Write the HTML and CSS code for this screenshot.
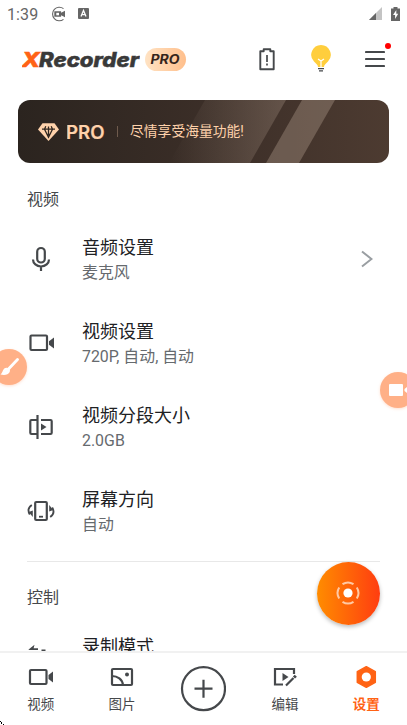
FILE: index.html
```html
<!DOCTYPE html>
<html lang="zh-CN">
<head>
<meta charset="utf-8">
<title>XRecorder</title>
<link rel="stylesheet" href="styles.css">
</head>
<body>
<div class="app">
  <div class="status">
    <span class="clock">1:39</span>
    <svg class="rec" width="16" height="16" viewBox="0 0 16 16"><path d="M12.500 2.600A6.800 6.800 0 1 0 12.500 13.400" fill="none" stroke="#666" stroke-width="1.100"/><path d="M3.300 5.200h6.800v1.600L14 4.700v6.600l-3.900-2.100v1.600H3.300z" fill="#666"/><rect x="5.300" y="6.800" width="2.700" height="2.500" fill="#fff"/></svg>
    <svg class="a-icon" width="11" height="11" viewBox="0 0 11 11"><rect width="11" height="11" rx="1" fill="#666"/><path d="M3 8.500 5.500 2.500 8 8.500M3.800 6.700h3.400" fill="none" stroke="#fff" stroke-width="1.300"/></svg>
    <svg class="signal" width="13" height="13" viewBox="0 0 13 13"><path d="M0 13 13 0V13z" fill="#c4c4c4"/><path d="M0 13 7 6V13z" fill="#666"/></svg>
    <svg class="batt" width="9" height="14" viewBox="0 0 9 14"><path d="M2.500 0h4v1.500H9V14H0V1.500h2.500z" fill="#666"/><path d="M5.300 3 2 8h2.100v4L7.200 6.800H5.300z" fill="#fff"/></svg>
  </div>
  <header class="header">
    <svg class="logo" width="118" height="24" viewBox="0 0 118 24"><text class="logo-text logo-x" y="19.500" x="-0.500" textLength="18.500" lengthAdjust="spacingAndGlyphs">X</text><text class="logo-text" y="19.500" x="17" textLength="100" lengthAdjust="spacingAndGlyphs">Recorder</text></svg>
    <span class="badge"><svg width="41" height="23" viewBox="0 0 41 23"><text class="badge-text" x="5.500" y="16" textLength="29" lengthAdjust="spacingAndGlyphs">PRO</text></svg></span>
    <svg class="h-batt" width="16" height="23" viewBox="0 0 16 23"><path d="M1.300 3.300h3.400V1.200h6.600v2.100h3.400v18H1.300z" fill="none" stroke="#45484b" stroke-width="1.900" stroke-linejoin="round"/><path d="M8 7v7M8 15.500v2" stroke="#45484b" stroke-width="1.700"/></svg>
    <svg class="bulb" width="20" height="27" viewBox="0 0 20 27"><path d="M10 0a9.800 9.800 0 0 0-7 16.600c2.200 2.300 3.700 3 4 5.400h6c.3-2.400 1.800-3.100 4-5.400A9.800 9.800 0 0 0 10 0z" fill="#ffce3d"/><path d="M7 14l3 2 3-2M10 16v6" fill="none" stroke="#fff" stroke-width="1.200"/><path d="M7 23.600h6M8 25.800h4" stroke="#45484b" stroke-width="1.200"/></svg>
    <div class="menu"><svg width="20" height="18" viewBox="0 0 20 18"><path d="M1 2h18M1 9h18M1 16h18" stroke="#45484b" stroke-width="2.200" stroke-linecap="round"/></svg><i class="dot"></i></div>
  </header>
  <section class="banner">
    <svg class="shine" width="371" height="63" viewBox="0 0 371 63"><defs><linearGradient id="g1"><stop offset="0" stop-color="#9b887a" stop-opacity="0"/><stop offset="1" stop-color="#9b887a" stop-opacity=".38"/></linearGradient></defs><path d="M187 0h81l-36 63H151z" fill="url(#g1)"/><path d="M284 0h33l-36 63h-33z" fill="#b9a594" fill-opacity=".35"/></svg>
    <svg class="gem" width="21" height="18" viewBox="0 0 21 18"><path d="M4.500.3h12L21 6.500 10.500 18 0 6.500z" fill="#ffd2ab"/><path d="M4 6.200h13M7.800 3.300l-1.300 3 4 8 4-8-1.300-3M10.500 3.600v9" fill="none" stroke="#30261f" stroke-width="1.300"/></svg>
    <svg class="banner-pro" width="40" height="20" viewBox="0 0 40 20"><text class="banner-pro-text" x="-1" y="16.500" textLength="38.500" lengthAdjust="spacingAndGlyphs">PRO</text></svg><i class="bar"></i><span class="banner-text">尽情享受海量功能!</span>
  </section>
  <main class="list">
    <h2 class="section">视频</h2>
    <div class="row">
      <svg class="icon" width="28" height="28" viewBox="0 0 28 28"><rect x="10.200" y="3" width="7.600" height="14.500" rx="3.800"/><path d="M6 14.500a8 7 0 0 0 16 0M14 21.500V26"/></svg>
      <div class="words"><b>音频设置</b><span>麦克风</span></div>
      <svg class="chev" width="12" height="18" viewBox="0 0 12 18"><path d="M1 1.500 10.500 9 1 16.500" fill="none" stroke="#999ea2" stroke-width="2"/></svg>
    </div>
    <div class="row">
      <svg class="icon" width="28" height="28" viewBox="0 0 28 28"><rect x="3.500" y="6.500" width="16.500" height="14.500" rx="1"/><path class="solid" d="M27 8.500v11l-5-3.700v-3.600z"/></svg>
      <div class="words"><b>视频设置</b><span>720P, 自动, 自动</span></div>
    </div>
    <div class="row">
      <svg class="icon" width="28" height="28" viewBox="0 0 28 28"><path d="M10 7H4.500Q3.300 7 3.300 8.200v11.600Q3.300 21 4.500 21H10M10.500 2v24M14 7h9.500q1.200 0 1.200 1.200v11.600q0 1.200-1.200 1.200H14"/><path class="solid" d="M14 10.500l5.500 3.500-5.500 3.500z"/></svg>
      <div class="words"><b>视频分段大小</b><span>2.0GB</span></div>
    </div>
    <div class="row">
      <svg class="icon" width="28" height="28" viewBox="0 0 28 28"><rect x="8.200" y="5" width="11.600" height="18" rx="1"/><path d="M12 19.700h4" stroke-width="1.800"/><path d="M4.800 8C1 10.500.8 14 2.800 17.500M23.200 20c3.800-2.500 4-6 2-9.500" stroke-width="1.800"/><path class="solid" d="M1.700 15 5.800 13.500v6.500zM26.300 13 22.200 14.500V8z"/></svg>
      <div class="words"><b>屏幕方向</b><span>自动</span></div>
    </div>
    <hr class="rule">
    <h2 class="section second">控制</h2>
    <div class="row">
      <svg class="icon" width="28" height="28" viewBox="0 0 28 28"><path class="solid" d="M1.300 5.700 7.500.8 6.600 4.200H11v1.800H3z"/><path class="solid" d="M14.500 5.500h4v1.500l2 .5V12h-6z"/></svg>
      <div class="words"><b>录制模式</b></div>
    </div>
  </main>
  <nav class="nav">
    <div class="tab"><svg class="icon" width="28" height="28" viewBox="0 0 28 28"><rect x="3" y="7" width="16.500" height="14" rx="1"/><path class="solid" d="M26 8.500v11l-4.500-3.500v-4z"/></svg><span>视频</span></div>
    <div class="tab"><svg class="icon" width="28" height="28" viewBox="0 0 28 28"><rect x="4" y="6" width="20" height="16" rx="1"/><path d="M4 13c5.500 0 10.500 3.500 11 9"/><circle class="solid" cx="19" cy="11.500" r="2"/></svg><span>图片</span></div>
    <div class="tab plus"><svg class="icon" width="46" height="46" viewBox="0 0 46 46"><circle cx="23.500" cy="22.700" r="21.500"/><path d="M14.500 22.700h18M23.500 13.700v18"/></svg></div>
    <div class="tab"><svg class="icon" width="28" height="28" viewBox="0 0 28 28"><path d="M23 11V6H4v15.500h8M15 22.500l7.500-7.500"/><path d="M23 14.500l1.800-1.800" stroke-width="3"/><path class="solid" d="M11.500 10l6 4-6 4z"/></svg><span>编辑</span></div>
    <div class="tab active"><svg width="28" height="28" viewBox="0 0 28 28"><path d="M14.300 3.700l9 5v10.600l-9 5-9-5V8.700z" fill="#ff6314" stroke="#ff6314" stroke-width="1.500" stroke-linejoin="round"/><circle cx="14.300" cy="14" r="4.600" fill="#fff"/></svg><span>设置</span></div>
  </nav>
  <div class="bubble brush"><svg width="19" height="19" viewBox="0 0 19 19"><path d="M17.500 1.500 9 10.500" stroke="#fff" stroke-width="2.800" stroke-linecap="round"/><path d="M7 9.800c2.500.3 3.600 2 2.700 4.200-1.300 3-5.500 3.500-9.200 2.500C3 15 2.500 9.500 7 9.800z" fill="#fff"/></svg></div>
  <div class="bubble cam"><svg width="24" height="12" viewBox="0 0 24 12"><rect width="14" height="12" rx="1" fill="#fff"/><path d="M15.500 5 20 1.500v9L15.500 7z" fill="#fff"/></svg></div>
  <div class="fab"><svg width="26" height="26" viewBox="0 0 26 26"><circle cx="13" cy="13" r="4.600" fill="#fff"/><g fill="none" stroke="#ffc9a4" stroke-width="2"><path d="M7.500 4.200a10.300 10.300 0 0 1 11 0M7.500 21.800a10.300 10.300 0 0 0 11 0M4.200 7.500a10.300 10.300 0 0 0 0 11M21.800 7.500a10.300 10.300 0 0 1 0 11"/></g></svg></div>
  <svg class="corner" width="4" height="4" viewBox="0 0 4 4"><path d="M0 0h1v1H0zM1 1h1v1H1zM1 2h1v1H1zM3 3h1v1H3z" fill="#000"/></svg>
</div>
</body>
</html>
```
FILE: styles.css
```css
* { box-sizing: border-box; }
body { margin: 0; background: #fff; font-family: Roboto, "Noto Sans CJK SC", sans-serif; color: #202124; }
svg { display: block; flex: none; }
.app { position: relative; width: 407px; height: 725px; overflow: hidden; display: flex; flex-direction: column; }
.status { height: 28px; flex: none; display: flex; align-items: center; padding: 0 7px 0 7px; }
.clock { font-size: 16px; line-height: 28px; color: #666; width: 44px; padding-top: 1px; letter-spacing: .1px; }
.a-icon { margin-left: 11px; }
.rec, .a-icon, .signal, .batt { margin-top: -1px; }
.signal { margin-left: auto; margin-right: 9px; }
.header { height: 62px; flex: none; display: flex; align-items: center; padding: 0 21px 0 22px; }
.logo-text { font: italic 800 20px Inter, sans-serif; fill: #393939; stroke: #393939; stroke-width: .5px; }
.logo-x { fill: #ff6314; stroke: #ff6314; }
.badge { margin-left: 5px; width: 41px; height: 23px; border-radius: 12px; background: linear-gradient(90deg, #ffe3c4, #ffbf8c); }
.badge-text { font: italic 700 12.5px Inter, sans-serif; fill: #35251c; }
.h-batt { margin-left: 73px; }
.bulb { margin-left: 36px; margin-top: -1px; }
.menu { position: relative; margin-left: 34px; }
.dot { position: absolute; left: 20px; top: -7px; width: 6px; height: 6px; border-radius: 50%; background: #f00; }
.banner { position: relative; flex: none; margin: 10px 18px 0; height: 63px; border-radius: 12px; overflow: hidden; display: flex; align-items: center; padding-left: 20px; background: linear-gradient(90deg, #2b241f, #3e3029 60%, #4d3b31); color: #ffd2ab; }
.shine { position: absolute; left: 0; top: 0; }
.banner-pro { position: relative; margin-left: 8px; }
.banner-pro-text { font: 600 18px Inter, sans-serif; fill: #ffd2ab; stroke: #ffd2ab; stroke-width: .2px; }
.bar { width: 1px; height: 11px; margin-left: 10px; background: #6f5b4d; }
.banner-text { position: relative; margin: -3px 0 0 12px; font-size: 13.800px; white-space: nowrap; }
.list { flex: 1; min-height: 0; overflow: hidden; padding: 25px 27px 0; }
.section { margin: 0; height: 24px; font-size: 16px; line-height: 24px; font-weight: 400; color: #45484b; }
.section + .row { margin-top: 6px; }
.section.second + .row { margin-top: 7px; }
.row { height: 84px; display: flex; align-items: center; }
.row .icon { margin: -2px 0 0 -.5px; }
.icon { fill: none; stroke: #45484b; stroke-width: 2.200; }
.icon .solid { fill: #45484b; stroke: none; }
.words { margin-left: 27.500px; flex: 1; height: 50px; display: flex; flex-direction: column; }
.words b { font-size: 18px; line-height: 26px; font-weight: 400; }
.words span { font-size: 15.900px; line-height: 24px; color: #666a6e; }
.chev { margin: -2px 7px 0 0; }
.rule { width: 353px; height: 1px; border: 0; margin: 7px 0 0; background: #e8e8e8; }
.second { margin-top: 24px; }
.nav { height: 74px; flex: none; border-top: 2px solid #f1f1f1; background: #fff; display: grid; grid-template-columns: repeat(5, 1fr); }
.tab { display: flex; flex-direction: column; align-items: center; padding-top: 10px; }
.tab span { font-size: 13.500px; line-height: 20px; margin-top: 3px; color: #45484b; }
.tab.plus { padding-top: 13px; }
.tab.active span { color: #ff6314; font-weight: 700; }
.bubble { position: absolute; width: 36px; height: 36px; border-radius: 50%; background: #ffb087; display: flex; align-items: center; box-shadow: 0 1px 3px #ffb08766; }
.brush { left: -9px; top: 349px; padding-left: 9px; }
.cam { left: 380px; top: 372px; padding-left: 9px; }
.fab { position: absolute; left: 316.500px; top: 561.500px; width: 63px; height: 63px; border-radius: 50%; background: linear-gradient(90deg, #ff8c00, #ff3d10); box-shadow: 0 2px 4px #0004; display: flex; align-items: center; justify-content: center; }
.corner { position: absolute; left: 0; bottom: 0; }
```
